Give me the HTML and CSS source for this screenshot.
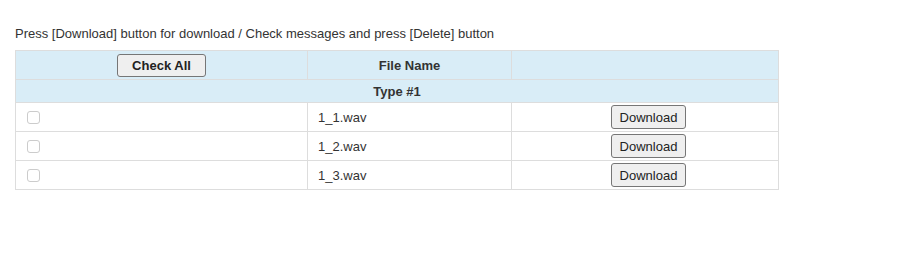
FILE: index.html
```html
<!DOCTYPE html>
<html lang="en">
<head>
    <title>Download</title>
    <link rel="stylesheet" href="styles.css">
</head>
<body>
    <p class="hint">Press [Download] button for download / Check messages and press [Delete] button</p>
    <table class="files">
        <thead>
            <tr>
                <th class="col-check"><button class="btn btn-bold">Check All</button></th>
                <th class="col-name">File Name</th>
                <th class="col-action"></th>
            </tr>
            <tr>
                <th colspan="3" class="group">Type #1</th>
            </tr>
        </thead>
        <tbody>
            <tr>
                <td><input type="checkbox"></td>
                <td>1_1.wav</td>
                <td class="center"><button class="btn">Download</button></td>
            </tr>
            <tr>
                <td><input type="checkbox"></td>
                <td>1_2.wav</td>
                <td class="center"><button class="btn">Download</button></td>
            </tr>
            <tr>
                <td><input type="checkbox"></td>
                <td>1_3.wav</td>
                <td class="center"><button class="btn">Download</button></td>
            </tr>
        </tbody>
    </table>
</body>
</html>
```

FILE: styles.css
```css
body {
    margin: 0;
    padding: 26px 15px;
    font-family: "Liberation Sans", Arial, sans-serif;
    font-size: 13px;
    color: #333;
}
.hint {
    margin: 0 0 8px 0;
    line-height: 16px;
}
.files {
    border-collapse: collapse;
    width: 764px;
}
.files th, .files td {
    border: 1px solid #ddd;
    padding: 0 10px;
    text-align: left;
    font-size: 13px;
}
.files thead th {
    background-color: #d9edf7;
    text-align: center;
    font-weight: bold;
    height: 28px;
}
.files th.group {
    height: 22px;
}
.files td {
    height: 28px;
}
.col-check {
    width: 271px;
}
.col-name {
    width: 183px;
}
.files td.center {
    text-align: center;
    padding-left: 17px;
}
.files input[type="checkbox"] {
    appearance: none;
    width: 13px;
    height: 13px;
    margin: 0 0 0 1px;
    border: 1px solid #ccc;
    border-radius: 3px;
    background: #fff;
    vertical-align: middle;
    display: block;
}
.btn {
    font-family: "Liberation Sans", Arial, sans-serif;
    font-size: 13px;
    color: #222;
    background-color: #efefef;
    border: 1px solid #767676;
    border-radius: 3px;
    padding: 1px 8px;
    height: 24px;
    vertical-align: middle;
}
.btn-bold {
    font-weight: bold;
    width: 89px;
    height: 23px;
}
```
